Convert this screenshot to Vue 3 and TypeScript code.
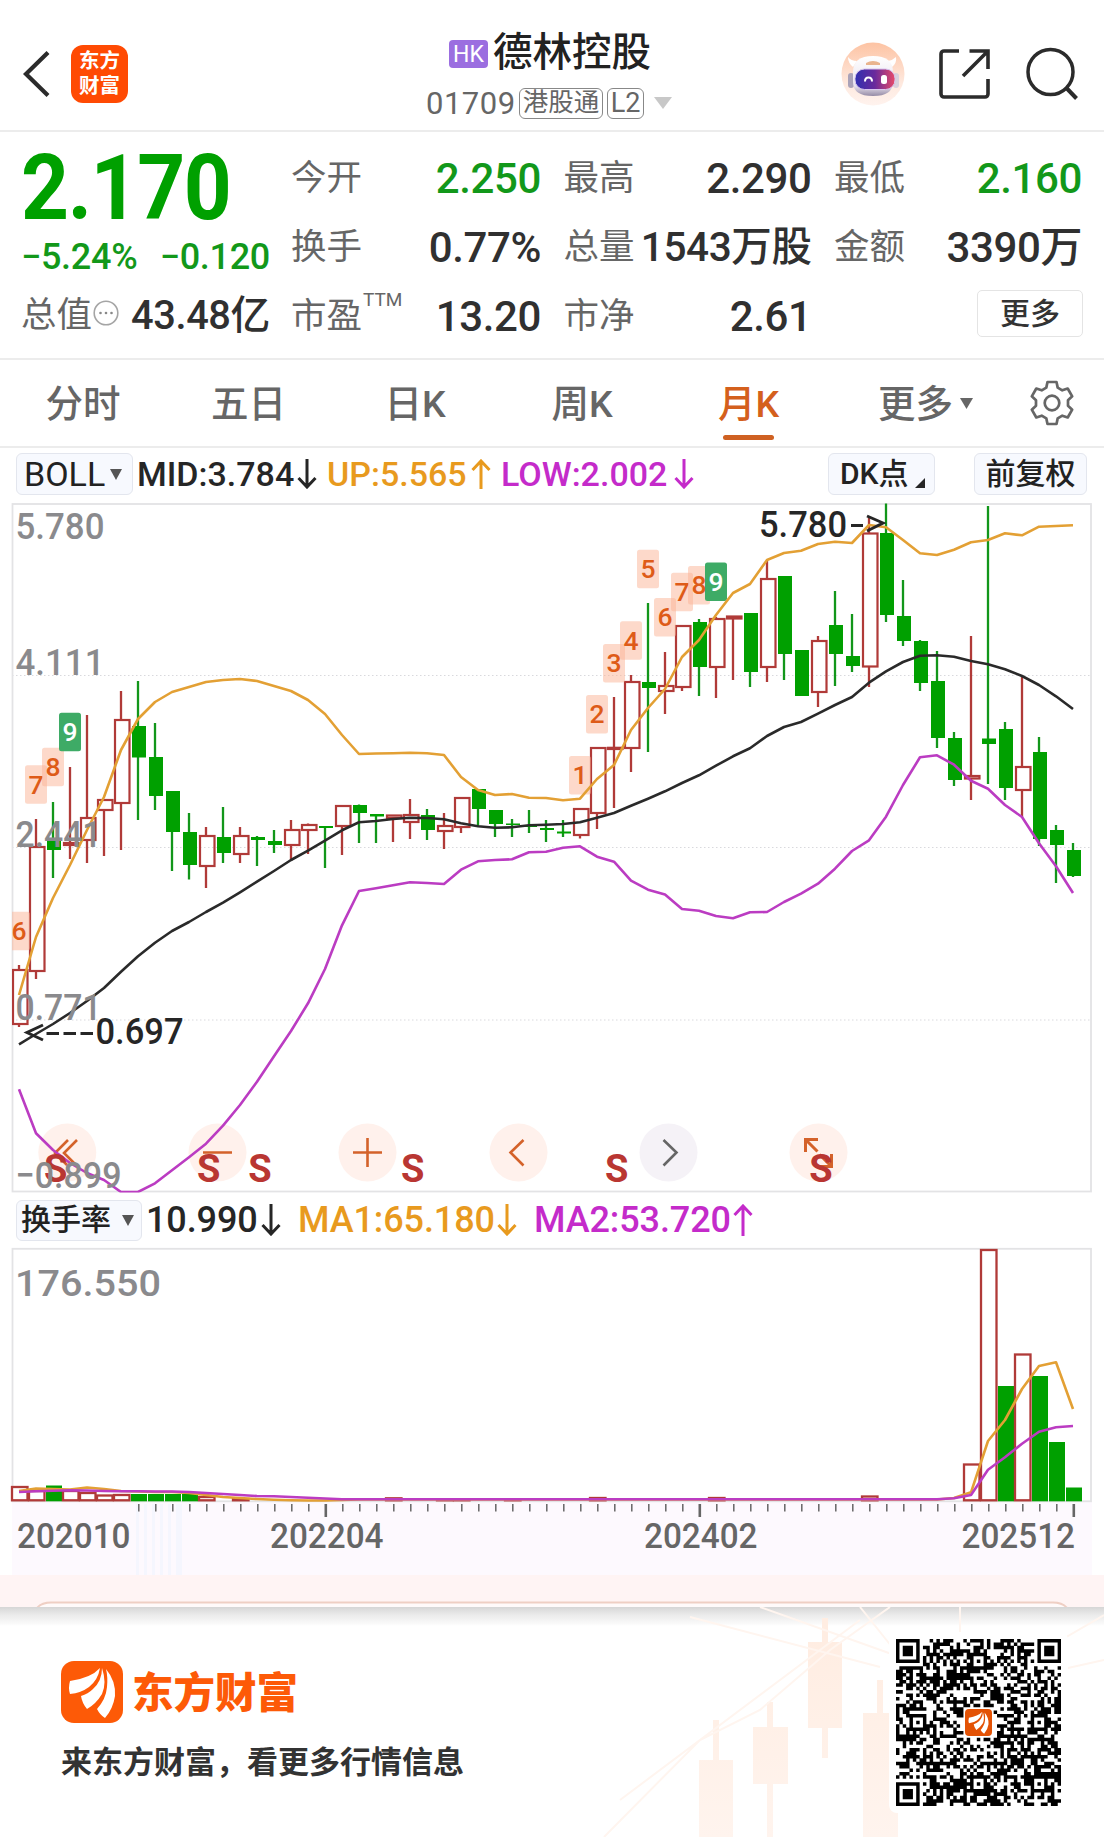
<script setup lang="ts">
type Candle = [kind: 'r' | 'g', high: number, top: number, bottom: number, low: number]

const STEP = 17
const px = (i: number): number => 19 + STEP * i

const candles: Candle[] = [
  ['r', 965, 970, 1024, 1027], ['r', 819, 847, 971, 979], ['g', 802, 841, 850, 878], ['r', 767, 843, 845, 859],
  ['r', 715, 818, 840, 863], ['r', 800, 800, 810, 856], ['r', 691, 720, 803, 850], ['g', 681, 726, 757.5, 820],
  ['g', 723, 757, 796, 810], ['g', 791, 791, 832, 871], ['g', 813, 832, 865, 879.5], ['r', 827, 836, 866, 888],
  ['g', 807, 837, 853, 863], ['r', 827, 836, 854, 863], ['g', 836, 837, 840, 866], ['g', 830, 841, 845, 853],
  ['r', 820, 830, 845, 861], ['r', 823.5, 825, 830, 854], ['g', 826, 826, 828, 868], ['r', 806, 806, 826, 855],
  ['g', 804.5, 805, 813, 843], ['g', 814, 814, 816.5, 843], ['r', 815.5, 815.5, 818, 842], ['r', 799, 815, 822, 839],
  ['g', 809, 815, 830, 840], ['r', 813, 826, 831, 849], ['r', 798, 798, 827, 833], ['g', 789, 789, 809, 826],
  ['g', 810, 810, 824, 837], ['g', 819, 823.5, 825, 837], ['g', 810, 825, 827, 833], ['g', 820, 828, 830, 842],
  ['g', 820, 831.5, 833.5, 837], ['r', 809, 809, 835, 838.5], ['r', 748, 748, 813, 829], ['r', 697, 747.8, 749, 808],
  ['r', 675, 682, 748, 772], ['g', 603, 682, 688, 752], ['r', 652, 686, 691, 714], ['r', 626, 626, 687, 691],
  ['g', 619, 622, 667, 696], ['r', 617, 619, 667, 698], ['r', 616, 616.5, 618.5, 680], ['g', 613, 613, 672, 687],
  ['r', 561, 579, 667, 682], ['g', 576, 576, 654, 680], ['g', 650, 650, 696, 696], ['r', 636, 641, 692, 707],
  ['g', 591, 625, 654, 686], ['g', 614, 656, 666, 672], ['r', 518, 533.5, 666.5, 687], ['g', 503.5, 533, 615, 622],
  ['g', 580, 616, 641, 646], ['g', 640, 641, 683, 691], ['g', 651, 681, 738, 748], ['g', 732, 738, 780, 786],
  ['r', 636, 776, 778.5, 800], ['g', 506, 738.5, 744, 784], ['g', 722, 729, 788, 800], ['r', 677, 767, 790, 817],
  ['g', 737, 752, 839, 846], ['g', 825, 830, 845, 883], ['g', 843, 850, 876, 877],
]

const up = [995, 937, 898, 865, 830, 797, 750, 719, 702, 692, 687, 682, 680, 679, 681, 686, 691, 700, 714, 735, 754, 753.5, 753.2, 752.7, 753.3, 755, 777, 790, 795, 794, 797.7, 798, 800.3, 798.7, 779, 765, 730, 708, 689, 657, 640, 615, 593, 584, 560, 553, 550.7, 544, 541.7, 543, 525, 527.3, 540, 553.3, 555, 549.7, 542.3, 540, 533.3, 535.3, 526.7, 526, 525.3]
const mid = [1044.3, 1034, 1024, 1013, 1001, 988, 971.7, 956.3, 942.7, 931, 922, 912, 902.7, 892.3, 881.7, 871, 860, 850.7, 840.7, 830.3, 822.3, 821, 819, 817.7, 818, 819.3, 823.3, 826.3, 827.7, 827.3, 825.3, 824.7, 824, 822.3, 817.7, 813, 805.7, 798.7, 791.3, 783, 775.3, 765.7, 756.3, 748.3, 736, 727, 722, 713.7, 705, 697, 682.7, 671.3, 662, 655.7, 655.3, 656.7, 661, 664.3, 669.3, 676, 685, 696.3, 709]
const low = [1089.3, 1133.3, 1150, 1163, 1173, 1180, 1192, 1192, 1183.3, 1170.3, 1157.3, 1143.7, 1125.7, 1105, 1081.7, 1056.3, 1031, 1003.3, 969, 925.3, 891, 888.3, 885.3, 882.3, 883, 884, 869.7, 861.3, 860, 859.3, 852.3, 851.7, 847.7, 846.3, 856.7, 861.7, 880.7, 889.7, 894.5, 909, 910.7, 916, 918.3, 912.3, 912, 902, 893.7, 883.7, 868.7, 851, 840.3, 816.7, 785, 757.3, 755.3, 764.7, 780.7, 788.7, 805, 817, 843.3, 866.3, 893]

const line = (ys: number[]): string => ys.map((y, i) => `${px(i)},${y}`).join(' ')

/** Nine-turn sequence counters: [month index, top, digit] */
const counters: [number, number, number][] = [
  [0, 911.7, 6], [1, 765.3, 7], [2, 747.7, 8], [3, 712.8, 9], [33, 756, 1], [34, 695, 2], [35, 644, 3],
  [36, 621.3, 4], [37, 549.7, 5], [38, 598, 6], [39, 572.7, 7], [40, 566, 8], [41, 562.5, 9],
]

const sellMarks = [55.6, 208.8, 260, 412.7, 616.8, 821]
const priceLabels: [string, number, number][] = [['5.780', 538.5, 87], ['4.111', 674.7, 87], ['2.441', 847, 84], ['0.771', 1020.3, 84], ['−0.899', 1188, 104]]

const bars: [number, 'r' | 'g', number][] = [
  [0, 'r', 1487], [1, 'r', 1491], [2, 'g', 1485.5], [3, 'r', 1491], [4, 'r', 1493], [5, 'r', 1495.5], [6, 'r', 1495],
  [7, 'g', 1494], [8, 'g', 1494], [9, 'g', 1494], [10, 'g', 1494], [11, 'r', 1497], [13, 'r', 1499], [22, 'r', 1498.3],
  [25, 'r', 1499.3], [26, 'r', 1499.3], [29, 'r', 1499.5], [34, 'r', 1498], [41, 'r', 1498], [50, 'r', 1496.5],
  [56, 'r', 1464.5], [57, 'r', 1250], [58, 'g', 1386], [59, 'r', 1354.5], [60, 'g', 1376], [61, 'g', 1442], [62, 'g', 1487.5],
]
const flat = (n: number, y: number): number[] => Array.from({ length: n }, () => y)
const ma1 = [1491, 1488.5, 1489, 1489.5, 1487.5, 1489, 1491, 1491.5, 1492, 1492, 1493, 1495, 1497, 1498, 1499, 1499.8, 1500.3, 1500.5, 1500.5, 1500, ...flat(35, 1499.5), 1498, 1492.3, 1441, 1420, 1389, 1366, 1362.3, 1409]
const ma2 = [1492, 1491.3, 1490.8, 1490.3, 1490.5, 1491, 1491.2, 1491.2, 1491.5, 1491.5, 1492, 1493, 1494, 1495, 1496, 1496.3, 1497, 1497.7, 1498.5, 1499.3, ...flat(35, 1499.3), 1498.3, 1495, 1469.7, 1457.3, 1443.7, 1431.7, 1427.3, 1426]
const ticks = Array.from({ length: 56 }, (_, k) => k + 7)
const majors = [18, 40, 62]
const dates: [string, number][] = [['202010', 17], ['202204', 270], ['202402', 644], ['202512', 961.5]]

const tabs = [{ t: '分时', w: 166 }, { t: '五日', w: 165 }, { t: '日K', w: 168 }, { t: '周K', w: 166 }, { t: '月K', w: 167, on: true }]

const stats = [
  { k: '今开', v: '2.250', c: 'down' }, { k: '最高', v: '2.290', c: '' }, { k: '最低', v: '2.160', c: 'down' },
  { k: '换手', v: '0.77%', c: '' }, { k: '总量', v: '1543万股', c: 'tight' }, { k: '金额', v: '3390万', c: '' },
  { k: '市盈', sup: 'TTM', v: '13.20', c: '' }, { k: '市净', v: '2.61', c: '' },
]

/** QR symbol: finder, timing and alignment patterns with a filled data area */
const N = 49
function qrPath(): string {
  let seed = 20251
  const rnd = (): number => (seed = (seed * 1103515245 + 12345) % 2147483648) / 2147483648
  const ring = (dx: number, dy: number, r: number): boolean => {
    const m = Math.max(Math.abs(dx), Math.abs(dy))
    return r === 3 ? m !== 2 : m !== 1
  }
  const finders = [[3, 3], [N - 4, 3], [3, N - 4]]
  const aligns = [[24, 6], [6, 24], [42, 24], [24, 42], [42, 42]]
  let d = ''
  for (let y = 0; y < N; y++) {
    for (let x = 0; x < N; x++) {
      let on = rnd() < 0.54
      if (x === 6 || y === 6) on = (x + y) % 2 === 0
      for (const [cx, cy] of aligns) if (Math.abs(x - cx) < 3 && Math.abs(y - cy) < 3) on = ring(x - cx, y - cy, 2)
      for (const [cx, cy] of finders) {
        const m = Math.max(Math.abs(x - cx), Math.abs(y - cy))
        if (m === 4) on = false
        if (m < 4) on = ring(x - cx, y - cy, 3)
      }
      if (Math.abs(x - 24) < 5 && Math.abs(y - 24) < 5) on = false
      if (on) d += `M${x} ${y}h1.03v1.03h-1.03z`
    }
  }
  return d
}
const qr = qrPath()
</script>

<template>
  <div class="page">
    <header class="nav">
      <svg class="back" width="30" height="50" viewBox="0 0 30 50"><path d="M26 3.5 4 25l22 21.500" fill="none" stroke="#2b2b2b" stroke-width="4.200" /></svg>
      <div class="app-icon"><span>东方</span><span>财富</span></div>
      <div class="title">
        <div class="name"><i class="hk">HK</i><b>德林控股</b></div>
        <div class="code"><span class="num">01709</span><span class="tag wide">港股通</span><span class="tag">L2</span>
          <svg width="18" height="12" viewBox="0 0 18 12"><path d="M0 0h18L9 12z" fill="#c8c8c8" /></svg>
        </div>
      </div>
      <svg class="bot" width="64" height="64" viewBox="0 0 64 64">
        <defs>
          <linearGradient id="halo" x1="0" y1="0" x2="0" y2="1"><stop offset="0" stop-color="#fdc3a3" /><stop offset=".65" stop-color="#fee9df" /><stop offset="1" stop-color="#fff3ee" /></linearGradient>
          <linearGradient id="visor" x1="0" y1="0" x2="1" y2="0"><stop offset="0" stop-color="#3030b0" /><stop offset=".5" stop-color="#6a2a9c" /><stop offset="1" stop-color="#e84a68" /></linearGradient>
          <linearGradient id="shell" x1="0" y1="0" x2="0" y2="1"><stop offset="0" stop-color="#fff" /><stop offset=".75" stop-color="#e9e3ee" /><stop offset="1" stop-color="#958ba6" /></linearGradient>
        </defs>
        <circle cx="32" cy="32" r="31.500" fill="url(#halo)" />
        <path d="M7 15q3 4 9 4l-4 6q-5-4-5-10zM55 15q-3 3-8 4l4 6q5-4 4-10z" fill="#fff" />
        <rect x="7" y="31" width="6" height="15" rx="3" fill="#aaa2b8" /><rect x="52" y="31" width="6" height="15" rx="3" fill="#d8d0dc" />
        <path d="M12 30q0-16 20-16t20 16v10q0 14-20 14T12 40z" fill="url(#shell)" />
        <path d="M25 21q7-4 14 0v2H25z" fill="#e9b48e" />
        <rect x="14" y="27" width="40" height="20.500" rx="9.500" fill="url(#visor)" stroke="#d7c5ee" />
        <path d="M24 39.500q0-4 3.500-4t3.500 4" fill="none" stroke="#fff" stroke-width="2" /><rect x="40" y="33" width="6" height="9" rx="2.500" fill="#fff" />
      </svg>
      <svg class="share" width="52" height="52" viewBox="0 0 52 52" fill="none" stroke="#2b2b2b" stroke-width="3.600">
        <path d="M21 3H6a3 3 0 0 0-3 3v40a3 3 0 0 0 3 3h41a3 3 0 0 0 3-3V31" /><path d="M31.500 3H50v18M50 3 25 28" />
      </svg>
      <svg width="52" height="54" viewBox="0 0 52 54" fill="none" stroke="#2b2b2b" stroke-width="3.500"><circle cx="24.500" cy="25" r="22.500" /><path d="m39.500 40 11 11.500" stroke-width="4" /></svg>
    </header>

    <section class="quote">
      <div class="left">
        <div class="price"><span>2.170</span></div>
        <div class="chg"><span>−5.24%</span><span>−0.120</span></div>
        <div class="cap">
          <span class="k">总值</span>
          <svg width="26" height="26" viewBox="0 0 26 26"><circle cx="13" cy="13" r="11.800" fill="none" stroke="#a5a5a5" stroke-width="1.600" /><circle cx="7.500" cy="13" r="1.300" fill="#888" /><circle cx="13" cy="13" r="1.300" fill="#888" /><circle cx="18.500" cy="13" r="1.300" fill="#888" /></svg>
          <span class="v">43.48亿</span>
        </div>
      </div>
      <div class="grid">
        <div v-for="s in stats" :key="s.k" class="cell">
          <span class="k">{{ s.k }}<sup v-if="s.sup">{{ s.sup }}</sup></span><span class="v" :class="s.c">{{ s.v }}</span>
        </div>
        <div class="cell end"><button class="more">更多</button></div>
      </div>
    </section>

    <nav class="tabs">
      <div v-for="t in tabs" :key="t.t" class="tab" :class="{ on: t.on }" :style="{ width: t.w + 'px' }"><span>{{ t.t }}</span></div>
      <div class="tab-more"><span>更多</span><svg width="13" height="11" viewBox="0 0 13 11"><path d="M0 0h13L6.500 11z" fill="#666" /></svg></div>
      <svg class="gear" width="46" height="46" viewBox="-23 -23 46 46" fill="none" stroke="#666" stroke-width="2.700" stroke-linejoin="round">
        <path d="M-4.500-21h9l1.200 5.600 4.600 2.700 5.400-1.800 4.500 7.800-4.200 3.900v5.600l4.200 3.900-4.500 7.800-5.400-1.800-4.600 2.700L4.500 21h-9l-1.200-5.600-4.600-2.700-5.400 1.800-4.500-7.800 4.200-3.900v-5.600l-4.200-3.900 4.500-7.800 5.400 1.800 4.600-2.700z" /><circle r="7.300" />
      </svg>
    </nav>

    <div class="ind">
      <div class="chip boll">BOLL<svg width="12" height="11" viewBox="0 0 12 11"><path d="M0 0h12L6 11z" fill="#555" /></svg></div>
      <span class="val">MID:3.784</span>
      <svg class="arr" width="20" height="30" viewBox="0 0 20 30" fill="none" stroke="#262626" stroke-width="3"><path d="M10 0v28M1.500 19 10 28l8.500-9" /></svg>
      <span class="val upc">UP:5.565</span>
      <svg class="arr" width="20" height="30" viewBox="0 0 20 30" fill="none" stroke="#e89a1e" stroke-width="3"><path d="M10 30V2M1.500 11 10 2l8.500 9" /></svg>
      <span class="val lowc">LOW:2.002</span>
      <svg class="arr" width="20" height="30" viewBox="0 0 20 30" fill="none" stroke="#c42bca" stroke-width="3"><path d="M10 0v28M1.500 19 10 28l8.500-9" /></svg>
      <div class="chip dk">DK点<svg width="10" height="10" viewBox="0 0 10 10"><path d="M10 0v10H0z" fill="#262626" /></svg></div>
      <div class="chip fq">前复权</div>
    </div>

    <svg class="chart" width="1104" height="697" viewBox="0 500 1104 697">
      <defs><clipPath id="plot"><rect x="12" y="503" width="1080" height="689.500" /></clipPath></defs>
      <g stroke="#d9d9dd" stroke-dasharray="1.500 2.500"><path d="M12 675.500h1079M12 847.500h1079M12 1020h1079" /></g>
      <rect x="12.500" y="504" width="1078.500" height="687.500" fill="none" stroke="#e3e3e5" stroke-width="1.800" />
      <g>
        <circle v-for="x in [67.3, 217.5, 367.5, 518.5, 818.5]" :key="x" :cx="x" cy="1152.500" r="29" fill="#fff1ec" />
        <circle cx="668.500" cy="1152.500" r="29" fill="#f5f2f7" />
        <g fill="none" stroke="#d4622a" stroke-width="2.600">
          <path d="M68 1140 55 1153l13 13M77 1140l-13 13 13 13" /><path d="M203 1152.500h29M353 1152.500h29M367.500 1138v29" /><path d="M523.500 1140l-13 12.500 13 13" />
          <path d="M805.500 1152v-12.500H818M806 1140l11.500 11.500M831.500 1154v12.500H820M831 1166l-11.500-11.500" stroke-width="3" />
        </g>
        <path d="m663.500 1140 13 12.500-13 13" fill="none" stroke="#666" stroke-width="2.600" />
      </g>
      <g clip-path="url(#plot)">
        <g v-for="(c, i) in candles" :key="i">
          <template v-if="c[0] === 'r'">
            <path :d="`M${px(i)} ${c[1]}V${c[2]}M${px(i)} ${c[3]}V${c[4]}`" stroke="#b03a38" stroke-width="2.300" />
            <rect :x="px(i) - 6" :y="c[2]" width="14.500" :height="c[3] - c[2]" fill="none" stroke="#b03a38" stroke-width="2.200" />
          </template>
          <template v-else>
            <path :d="`M${px(i)} ${c[1]}V${c[4]}`" stroke="#12961a" stroke-width="2.300" />
            <rect :x="px(i) - 6" :y="c[2]" width="14" :height="c[3] - c[2]" fill="#00a000" />
          </template>
        </g>
        <g v-for="n in counters" :key="n[0]" class="cnt">
          <rect :x="px(n[0]) - 11" :y="n[1]" width="22" height="38.500" rx="2.500" :fill="n[2] === 9 ? '#3eab66' : '#fbb496'" :fill-opacity="n[2] === 9 ? 1 : 0.5" />
          <text :x="px(n[0])" :y="n[1] + 28.2" text-anchor="middle" :fill="n[2] === 9 ? '#fff' : '#de5b18'">{{ n[2] }}</text>
        </g>
        <g fill="none" stroke-width="2.600" stroke-linejoin="round">
          <polyline :points="line(up)" stroke="#e3a034" /><polyline :points="line(mid)" stroke="#2a2a2a" /><polyline :points="line(low)" stroke="#bb3cc2" />
        </g>
      </g>
      <g class="sell"><text v-for="x in sellMarks" :key="x" :x="x" y="1182" text-anchor="middle">S</text></g>
      <g class="axis"><text v-for="l in priceLabels" :key="l[0]" x="15.500" :y="l[1]" :textLength="l[2] + 2" lengthAdjust="spacingAndGlyphs">{{ l[0] }}</text></g>
      <g class="ext">
        <text x="759" y="536.500" textLength="88" lengthAdjust="spacingAndGlyphs">5.780</text>
        <path d="M851 525.500h12M867 516l16 7-16 8" />
        <text x="95.500" y="1044" textLength="88" lengthAdjust="spacingAndGlyphs">0.697</text>
        <path d="M43 1025l-16 7.500 16 7.500M46.500 1033.500h12.500M63.500 1033.500H76M80.500 1033.500H93" />
      </g>
    </svg>

    <div class="ind sub">
      <div class="chip hs">换手率<svg width="12" height="11" viewBox="0 0 12 11"><path d="M0 0h12L6 11z" fill="#555" /></svg></div>
      <span class="val">10.990</span>
      <svg class="arr" width="20" height="32" viewBox="0 0 20 32" fill="none" stroke="#262626" stroke-width="3"><path d="M10 0v30M1.500 21 10 30l8.500-9" /></svg>
      <span class="val upc">MA1:65.180</span>
      <svg class="arr" width="20" height="32" viewBox="0 0 20 32" fill="none" stroke="#e89a1e" stroke-width="3"><path d="M10 0v30M1.500 21 10 30l8.500-9" /></svg>
      <span class="val lowc">MA2:53.720</span>
      <svg class="arr" width="20" height="32" viewBox="0 0 20 32" fill="none" stroke="#c42bca" stroke-width="3"><path d="M10 32V2M1.500 11 10 2l8.500 9" /></svg>
    </div>

    <svg class="chart" width="1104" height="361" viewBox="0 1246 1104 361">
      <rect x="12" y="1502" width="1080" height="73" fill="#fdf9fe" />
      <path d="M136 1504h3v71h-3zM144 1504h3v71h-3zM152 1504h3v71h-3zM160 1504h3v71h-3zM168 1504h3v71h-3zM176 1504h6v71h-6z" fill="#f5f6fe" />
      <rect x="12.500" y="1248.800" width="1078.500" height="252.500" fill="none" stroke="#e3e3e5" stroke-width="1.800" />
      <g v-for="b in bars" :key="b[0]">
        <rect v-if="b[1] === 'r'" :x="px(b[0]) - 7" :y="b[2]" width="15.500" :height="1500.3 - b[2]" fill="#fff" stroke="#b03a38" stroke-width="2.300" />
        <rect v-else :x="px(b[0]) - 7" :y="b[2]" width="16" :height="1501.3 - b[2]" fill="#00a000" />
      </g>
      <g fill="none" stroke-width="2.600" stroke-linejoin="round"><polyline :points="line(ma1)" stroke="#e3a034" /><polyline :points="line(ma2)" stroke="#bb3cc2" /></g>
      <path v-for="i in ticks" :key="i" :d="`M${px(i) + 0.8} 1504v${majors.includes(i) ? 13 : 7.5}`" stroke="#666" :stroke-width="majors.includes(i) ? 2.6 : 1.5" />
      <g class="axis"><text x="15" y="1295.500" textLength="146" lengthAdjust="spacingAndGlyphs">176.550</text></g>
      <g class="date"><text v-for="d in dates" :key="d[0]" :x="d[1]" y="1547.800" textLength="113.500" lengthAdjust="spacingAndGlyphs">{{ d[0] }}</text></g>
      <rect y="1575" width="1104" height="32" fill="#fff4f4" />
      <path d="M36 1609q5-6.500 15-6.500h1002q10 0 15 6.500z" fill="#fffafa" stroke="#efcfc4" stroke-width="1.800" />
    </svg>

    <footer class="foot">
      <svg class="deco" width="530" height="230" viewBox="574 1607 530 230">
        <defs><linearGradient id="fade" gradientUnits="userSpaceOnUse" x1="0" y1="1640" x2="0" y2="1837"><stop offset="0" stop-color="#ffede2" /><stop offset="1" stop-color="#fff4ee" /></linearGradient></defs>
        <g fill="url(#fade)">
          <path d="M808 1642h34v86h-34zM822 1618h6v140h-6zM753 1727h35v57h-35zM767 1702h6v135h-6zM699 1760h34v77h-34zM713 1720h6v40h-6zM863 1713h35v124h-35zM877 1680h6v40h-6z" />
        </g>
        <g fill="none" stroke="#fff5ef" stroke-width="2"><path d="M604 1837 700 1740l60-30 70-60 60-43M690 1617l190 50M760 1607l140 50M860 1607l40 50M960 1607v30M1104 1615l-60 35M1104 1660l-45 10M620 1800l240-180" /></g>
      </svg>
      <div class="brand">
        <div class="logo-row">
          <svg width="62" height="62" viewBox="0 0 62 62">
            <rect width="62" height="62" rx="13" fill="#fd5a07" />
            <g fill="#fff"><path d="M39 7Q30 17 9 20Q7 27 9 33Q20 32 28 26Q37 19 39 7z" /><path d="M41 7Q41 20 32 28Q27 33 20 35Q21 42 26 48Q35 43 41 33Q46 22 41 7z" /><path d="M45 8Q55 20 54 35Q52 48 44 57Q39 54 36 48Q45 38 46 26Q47 16 45 8z" /></g>
          </svg>
          <span>东方财富</span>
        </div>
        <p>来东方财富，看更多行情信息</p>
      </div>
      <div class="qr">
        <svg width="165" height="167" viewBox="0 0 49 49" preserveAspectRatio="none"><path :d="qr" fill="#000" /></svg>
        <svg class="qr-logo" width="27" height="27" viewBox="0 0 62 62"><rect width="62" height="62" rx="9" fill="#e35205" /><g fill="#fff"><path d="M39 7Q30 17 9 20Q7 27 9 33Q20 32 28 26Q37 19 39 7z" /><path d="M41 7Q41 20 32 28Q27 33 20 35Q21 42 26 48Q35 43 41 33Q46 22 41 7z" /><path d="M45 8Q55 20 54 35Q52 48 44 57Q39 54 36 48Q45 38 46 26Q47 16 45 8z" /></g></svg>
      </div>
    </footer>
  </div>
</template>

<style>
body { margin: 0; background: #fff; }
</style>

<style scoped>
.page { width: 1104px; height: 1837px; overflow: hidden; background: #fff; color: #333; font-family: Roboto, 'Noto Sans CJK SC', sans-serif; line-height: 1; }
svg { display: block; flex: none; }
.nav { box-sizing: border-box; height: 132px; border-bottom: 2px solid #ececec; display: flex; align-items: flex-start; padding: 0 24px 0 22px; }
.back { margin-top: 49px; }
.app-icon { margin: 45px 0 0 19px; width: 57px; height: 58px; border-radius: 12px; background: #ff4a03; color: #fff; font-weight: 700; font-size: 20.500px; display: flex; flex-direction: column; align-items: center; justify-content: center; gap: 4.500px; flex: none; }
.title { margin-left: 298px; width: 415px; padding-top: 32px; }
.name { display: flex; align-items: center; padding-left: 23px; height: 42px; }
.hk { font-style: normal; font-size: 23px; background: #9b6ee0; color: #fff; border-radius: 4px; width: 39px; height: 28px; display: flex; align-items: center; justify-content: center; margin: 2px 5px 0 0; }
.name b { font-size: 39.500px; font-weight: 500; color: #222; white-space: nowrap; }
.code { display: flex; align-items: center; height: 32px; margin-top: 13px; color: #666; }
.num { font-size: 31px; letter-spacing: .5px; width: 93px; }
.tag { border: 1.500px solid #888; border-radius: 6px; height: 29px; width: 35px; display: flex; align-items: center; justify-content: center; font-size: 27px; }
.tag.wide { width: 82px; font-size: 25.500px; margin-right: 4px; flex: none; }
.code svg { margin-left: 10px; }
.bot { margin-top: 42px; }
.share { margin: 48px 0 0 33px; }
.share + svg { margin: 47px 0 0 36px; }

.quote { box-sizing: border-box; height: 228px; border-bottom: 2px solid #ececec; display: flex; padding: 12px 21px 0 21px; }
.left { width: 249px; margin-right: 21px; color: #00a000; }
.price { height: 89px; display: flex; align-items: center; font-size: 90px; font-weight: 700; letter-spacing: -1.500px; }
.price span { display: inline-block; transform: scaleX(.93); transform-origin: 0 50%; }
.chg { height: 48px; display: flex; align-items: center; justify-content: space-between; font-size: 36px; font-weight: 500; color: #12981a; letter-spacing: -.3px; }
.cap { height: 69px; display: flex; align-items: center; justify-content: space-between; color: #333; }
.k { font-size: 35.500px; color: #666; white-space: nowrap; position: relative; }
.cap svg { margin: -6px 8px 0 -3px; }
.v { font-size: 42px; font-weight: 500; white-space: nowrap; color: #303030; letter-spacing: -.4px; }
.cap .v { font-size: 39.800px; }
.v.down { color: #12981a; }
.v.tight { font-size: 40.500px; }
.grid { flex: 1; display: grid; grid-template-columns: 250px 248px 248px; column-gap: 22.500px; grid-auto-rows: 69px; }
.cell { display: flex; align-items: center; justify-content: space-between; }
.cell.end { justify-content: flex-end; }
sup { position: absolute; left: 72px; top: -9px; font-size: 19px; line-height: 1; }
.more { width: 106px; height: 47px; border: 1.500px solid #e4e4e4; border-radius: 5px; background: #fff; font: 500 30px Roboto, 'Noto Sans CJK SC', sans-serif; line-height: 1; color: #333; padding: 0; margin: -6px -1px 0 0; }

.tabs { box-sizing: border-box; height: 88px; border-bottom: 2px solid #ececec; display: flex; align-items: stretch; font-size: 37.500px; color: #666; font-weight: 500; }
.tab { display: flex; justify-content: center; align-items: center; position: relative; flex: none; }
.tab span, .tab-more span { padding-top: 3px; }
.tab.on { color: #d4601d; }
.tab.on::after { content: ''; position: absolute; left: 58px; bottom: 6px; width: 51px; height: 5px; border-radius: 3px; background: #cf6122; }
.tab-more { display: flex; align-items: center; gap: 7px; margin-left: 46px; }
.gear { margin: 20px 0 0 56px; }

.ind { display: flex; align-items: center; height: 52px; padding-left: 16px; font-weight: 500; }
.chip { box-sizing: border-box; height: 42px; border: 1.500px solid #e3e6ee; border-radius: 6px; background: #f7f9fe; color: #222; display: flex; align-items: center; font-size: 30px; flex: none; white-space: nowrap; }
.boll { width: 117px; font-size: 34px; padding-left: 7px; gap: 5px; font-weight: 400; }
.val { font-size: 34px; white-space: nowrap; color: #262626; flex: none; }
.val.upc { color: #e89a1e; }
.val.lowc { color: #c42bca; }
.boll + .val { margin-left: 4px; width: 160px; }
.ind .upc { margin-left: 10px; width: 144px; }
.ind .lowc { margin-left: 10px; width: 173px; }
.dk { margin-left: 134px; width: 107px; padding-left: 11px; gap: 6px; }
.dk svg { margin-top: 18px; }
.fq { margin-left: 39px; width: 113px; justify-content: center; }
.chart { overflow: hidden; }
.sub { height: 49px; box-sizing: border-box; padding-bottom: 3px; }
.hs { width: 126px; padding-left: 4px; gap: 11px; height: 41px; }
.sub .val { font-size: 36px; letter-spacing: -.1px; }
.hs + .val { margin-left: 4px; width: 115px; }
.sub .upc { margin-left: 17px; width: 199px; }
.sub .lowc { margin-left: 17px; width: 199px; }

text { font-family: Roboto, sans-serif; font-weight: 500; }
.axis text { font-size: 37px; fill: #8a8a8d; }
.date text { font-size: 35px; fill: #666; }
.ext text { font-size: 36px; fill: #262626; }
.ext path { fill: none; stroke: #262626; stroke-width: 3; }
.cnt text { font-size: 26.500px; }
.sell text { font-size: 38px; font-weight: 700; fill: #b93632; }

.foot { position: relative; height: 230px; display: flex; justify-content: space-between; background: linear-gradient(#d6d6d6, #ebebeb 8px, #fafafa 17px, #fff 19px); }
.deco { position: absolute; right: 0; top: 0; }
.brand { position: relative; padding: 54px 0 0 61px; }
.logo-row { display: flex; align-items: center; gap: 9px; color: #fd5a07; font-size: 41.500px; font-weight: 900; }
.logo-row span { padding-top: 3px; }
.brand p { margin: 24px 0 0; font-size: 31px; font-weight: 700; color: #333; white-space: nowrap; }
.qr { position: relative; align-self: flex-start; margin: 25px 36px 0 0; padding: 7px; background: #fff; border-radius: 8px; }
.qr-logo { position: absolute; left: 76px; top: 77px; }
</style>
